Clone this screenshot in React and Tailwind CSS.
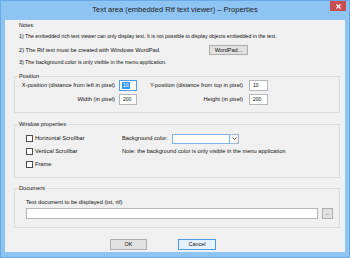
import React from 'react';

const Input = ({ value, focused, className = '' }) => (
    <div
        className={`h-[11px] bg-white border flex items-center pl-[2px] text-[5px] ${focused ? 'border-[#569de5]' : 'border-[#b5b7bc]'} ${className}`}
    >
        {focused ? (
            <span className="bg-[#3399ff] text-white px-[1px]">{value}</span>
        ) : (
            <span className="px-[1px]">{value}</span>
        )}
    </div>
);

const Group = ({ title, className = '', children }) => (
    <div className={`relative ml-[9px] mr-[5px] border border-[#dcdcdc] text-[5.7px] ${className}`}>
        <span className="absolute left-[3px] top-[-4px] bg-[#f0f0f0] px-[1px] leading-[7px]">{title}</span>
        {children}
    </div>
);

const Check = ({ label }) => (
    <div className="h-[13px] flex items-center">
        <div className="w-[7px] h-[7px] bg-white border border-[#4d4d4d]" />
        <span className="ml-[2px]">{label}</span>
    </div>
);

const Btn = ({ label, def, className = '' }) => (
    <div
        className={`flex items-center justify-center border text-[5.5px] ${def ? 'border-[#4f9be8] bg-[#e5f1fb]' : 'border-[#adadad] bg-[#e1e1e1]'} ${className}`}
    >
        {label}
    </div>
);

export default function App() {
    return (
        <div className="w-[350px] h-[258px] bg-[#8ec4f1] border border-[#6aa9e6] flex flex-col font-['Liberation_Sans',sans-serif] text-[#111] text-[5.3px] leading-[7px] overflow-hidden">
            {/* Title bar */}
            <div className="relative h-[19px] flex items-center justify-center">
                <span className="text-[7.5px] text-[#222] -mt-[3px]">Text area (embedded Rtf text viewer) – Properties</span>
                <div className="absolute right-[3px] top-0 w-[16px] h-[10px] bg-[#c75050] flex items-center justify-center">
                    <svg width="5" height="5" viewBox="0 0 5 5">
                        <path d="M0.5 0.5 L4.5 4.5 M4.5 0.5 L0.5 4.5" stroke="white" strokeWidth="1.1" />
                    </svg>
                </div>
            </div>

            {/* Client area */}
            <div className="flex-1 mx-[4px] mb-[5px] bg-[#f0f0f0] flex flex-col">
                {/* Notes */}
                <div className="pl-[14px] flex flex-col">
                    <div className="h-[8px] mt-[1px] flex items-center">Notes:</div>
                    <div className="h-[8px] mt-[3px] flex items-center text-[5.2px]">
                        1) The embedded rich text viewer can only display text. It is not possible to display objects embedded in the text.
                    </div>
                    <div className="h-[12px] mt-[4px] flex items-center">
                        <span className="w-[190px] text-[5.7px]">2) The Rtf text must be created with Windows WordPad.</span>
                        <Btn label="WordPad..." className="w-[39px] h-[10px]" />
                    </div>
                    <div className="h-[8px] mt-[2px] flex items-center">
                        3) The background color is only visible in the menu application.
                    </div>
                </div>

                {/* Position */}
                <Group title="Position" className="mt-[10px] h-[37px] pt-[3px]">
                    <div className="flex flex-col gap-[3px]">
                        <div className="flex items-center h-[11px]">
                            <span className="w-[100px] text-right">X-position (distance from left in pixel)</span>
                            <Input value="10" focused className="ml-[4px] w-[18px]" />
                            <span className="w-[106px] text-right">Y-position (distance from top in pixel)</span>
                            <Input value="10" className="ml-[6px] w-[19px]" />
                        </div>
                        <div className="flex items-center h-[11px]">
                            <span className="w-[100px] text-right">Width (in pixel)</span>
                            <Input value="200" className="ml-[4px] w-[18px]" />
                            <span className="w-[106px] text-right">Height (in pixel)</span>
                            <Input value="200" className="ml-[6px] w-[19px]" />
                        </div>
                    </div>
                </Group>

                {/* Window properties */}
                <Group title="Window properties" className="mt-[11px] h-[54px] pt-[7px] pl-[11px]">
                    <div className="flex">
                        <div className="w-[96px] flex flex-col">
                            <Check label="Horizontal Scrollbar" />
                            <Check label="Vertical Scrollbar" />
                            <Check label="Frame" />
                        </div>
                        <div className="flex flex-col">
                            <div className="h-[13px] flex items-center">
                                <span className="w-[50px]">Background color:</span>
                                <div className="w-[58px] h-[10px] bg-white border border-[#7eb4ea]" />
                                <div className="w-[9px] h-[10px] bg-[#f4f4f4] border border-[#9fb9d4] border-l-0 flex items-center justify-center">
                                    <svg width="5" height="3" viewBox="0 0 5 3">
                                        <path d="M0.5 0.5 L2.5 2.5 L4.5 0.5" stroke="#444" strokeWidth="0.8" fill="none" />
                                    </svg>
                                </div>
                            </div>
                            <div className="h-[13px] flex items-center">
                                Note: the background color is only visible in the menu application
                            </div>
                        </div>
                    </div>
                </Group>

                {/* Document */}
                <Group title="Document" className="mt-[10px] h-[40px] pt-[9px] pl-[11px]">
                    <div className="h-[8px] flex items-center">Text document to be displayed (txt, rtf)</div>
                    <div className="mt-[2px] flex items-center">
                        <Input value="" className="w-[292px]" />
                        <Btn label="..." className="ml-[4px] w-[11px] h-[11px]" />
                    </div>
                </Group>

                {/* Buttons */}
                <div className="mt-[11px] pl-[105px] flex">
                    <Btn label="OK" className="w-[37px] h-[11px]" />
                    <Btn label="Cancel" def className="ml-[31px] w-[38px] h-[11px]" />
                </div>
            </div>
        </div>
    );
}
